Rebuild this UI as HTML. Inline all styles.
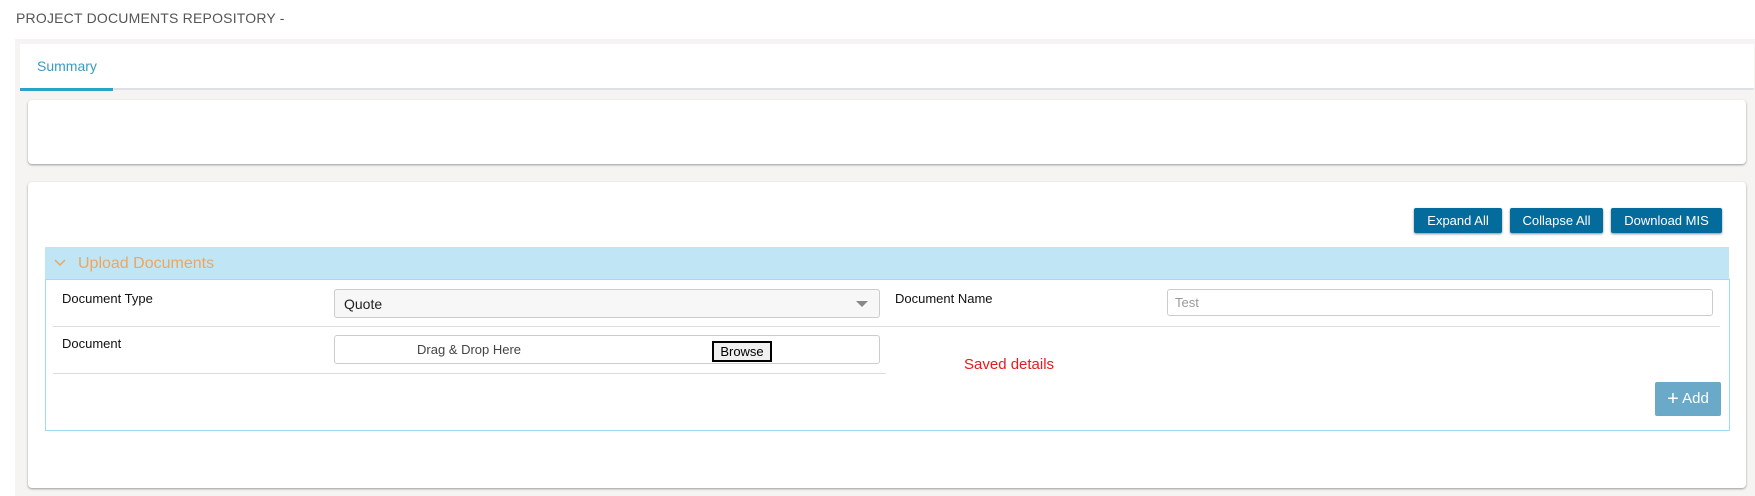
<!DOCTYPE html>
<html><head><meta charset="utf-8"><style>
*{box-sizing:border-box;margin:0;padding:0}
body{width:1755px;height:496px;background:#fff;font-family:"Liberation Sans",Arial,sans-serif;position:relative;overflow:hidden}
.a{position:absolute}
.title{left:16px;top:10px;font-size:14px;color:#555;letter-spacing:0.2px}
.gray{left:15px;top:39px;width:1740px;height:457px;background:#f5f4f2}
.tabbar{left:20px;top:44px;width:1734px;height:46px;background:#fff;border-bottom:2px solid #dde0e5}
.tab{left:37px;top:58px;font-size:14px;color:#3a9cc0}
.uline{left:20px;top:88px;width:93px;height:3px;background:#2aa3c8}
.card{background:#fff;border-radius:4px;box-shadow:0 1px 2px #999}
.btn{background:#036c9c;color:#fff;font-size:13px;text-align:center;line-height:25px;height:25px;top:208px;border-radius:2px;box-shadow:0 1px 2px #888}
.hdr{left:45px;top:247px;width:1684px;height:32px;background:#c0e6f6}
.hdrt{left:78px;top:255px;font-size:16px;color:#f0a55a}
.body{left:45px;top:279px;width:1685px;height:152px;border:1px solid #9ddcf5}
.lbl{font-size:13px;color:#111}
.line{height:1px;background:#ddd}
.inp{border:1px solid #ccc;border-radius:3px;background:#fff}
</style></head><body>
<div class="a title">PROJECT DOCUMENTS REPOSITORY -</div>
<div class="a gray"></div>
<div class="a tabbar"></div>
<div class="a tab">Summary</div>
<div class="a uline"></div>
<div class="a card" style="left:28px;top:100px;width:1718px;height:64px"></div>
<div class="a card" style="left:28px;top:182px;width:1718px;height:306px"></div>
<div class="a btn" style="left:1414px;width:88px">Expand All</div>
<div class="a btn" style="left:1510px;width:93px">Collapse All</div>
<div class="a btn" style="left:1611px;width:111px">Download MIS</div>
<div class="a hdr"></div>
<svg class="a" style="left:54px;top:258px" width="12" height="10" viewBox="0 0 12 10"><path d="M1 2 L6 7 L11 2" fill="none" stroke="#f0a55a" stroke-width="1.5"/></svg>
<div class="a hdrt">Upload Documents</div>
<div class="a body"></div>
<div class="a lbl" style="left:62px;top:291px">Document Type</div>
<div class="a inp" style="left:334px;top:289px;width:546px;height:29px;background:#f7f7f7"></div>
<div class="a" style="left:344px;top:296px;font-size:14px;color:#222">Quote</div>
<svg class="a" style="left:856px;top:300px" width="12" height="8"><path d="M0 1 L12 1 L6 7Z" fill="#888"/></svg>
<div class="a lbl" style="left:895px;top:291px">Document Name</div>
<div class="a inp" style="left:1167px;top:289px;width:546px;height:27px"></div>
<div class="a" style="left:1175px;top:295px;font-size:13px;color:#999">Test</div>
<div class="a line" style="left:53px;top:326px;width:1667px"></div>
<div class="a lbl" style="left:62px;top:336px">Document</div>
<div class="a inp" style="left:334px;top:335px;width:546px;height:29px"></div>
<div class="a" style="left:417px;top:342px;font-size:13px;color:#444">Drag &amp; Drop Here</div>
<div class="a" style="left:712px;top:341px;width:60px;height:21px;border:2px solid #000;background:#f0f0f0;font-size:13px;text-align:center;line-height:17px">Browse</div>
<div class="a line" style="left:53px;top:373px;width:833px"></div>
<div class="a" style="left:964px;top:356px;font-size:15px;color:#e8191b">Saved details</div>
<div class="a" style="left:1655px;top:382px;width:66px;height:34px;background:#6aa9c8;color:#fff;font-size:15px;line-height:34px;text-align:center;border-radius:2px"><span style="font-size:20px;vertical-align:-2px">+</span> Add</div>
</body></html>
